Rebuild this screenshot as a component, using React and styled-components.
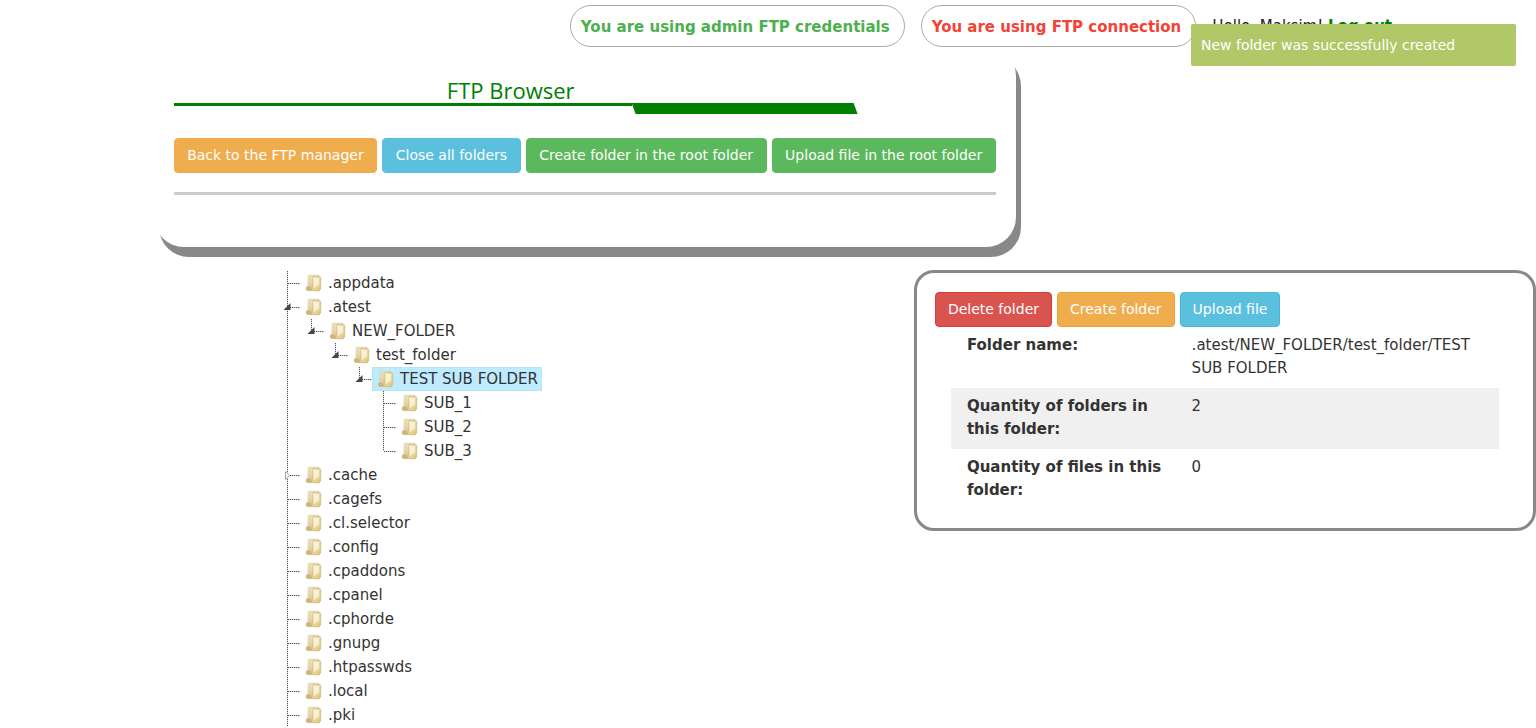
import React, { useState } from "react";
import styled, { createGlobalStyle, css } from "styled-components";

const GlobalStyle = createGlobalStyle`
  *, *::before, *::after { box-sizing: border-box; }
  body {
    margin: 0;
    background: #fff;
    color: #333;
    font: 15px/23px Verdana, "DejaVu Sans", sans-serif;
  }
`;

const Header = styled.header`
  display: flex;
  justify-content: flex-end;
  align-items: center;
  gap: 16px;
  padding: 5px 144px 0 16px;
  line-height: 24px;
`;

const Pill = styled.strong`
  padding: 9px 14px 7px 10px;
  border: 1px solid #aaa;
  border-radius: 21px;
  white-space: nowrap;
  color: ${(p) => p.$color};
`;

const Greeting = styled.div`
  color: #222;
  white-space: nowrap;
`;

const LogoutLink = styled.a`
  color: #008000;
  font-weight: bold;
  text-decoration: none;
`;

const Toast = styled.div`
  position: fixed;
  top: 24px;
  right: 20px;
  width: 325px;
  padding: 10px;
  border-radius: 2px;
  background: #b0c868;
  color: #fff;
  font-size: 14px;
  line-height: 22px;
  white-space: nowrap;
`;

const BrowserCard = styled.section`
  width: calc(56% + 2px);
  margin-left: 10%;
  margin-top: -1px;
  padding: 32px 20px 52px;
  border-radius: 30px;
  background: #fff;
  box-shadow: 5px 10px 0 #888;
`;

const Title = styled.h1`
  width: 82%;
  margin: 0;
  padding-bottom: 1px;
  color: #008000;
  font: 400 22px/24px "Open Sans", "Noto Sans", sans-serif;
  text-align: center;
`;

const TitleRule = styled.div`
  display: flex;
  width: 684px;
  max-width: 100%;
  height: 11px;
  margin-bottom: 24px;

  &::before {
    content: "";
    flex: 1;
    height: 3px;
    background: #008000;
  }

  &::after {
    content: "";
    width: 226px;
    background: #008000;
    clip-path: polygon(0 0, 222px 0, 100% 100%, 4px 100%);
  }
`;

const Toolbar = styled.div`
  display: flex;
  gap: 5px;
`;

const tones = {
  orange: ["#f0ad4e", "#eea236"],
  blue: ["#5bc0de", "#46b8da"],
  green: ["#5cb85c", "#4cae4c"],
  red: ["#d9534f", "#d43f3a"],
};

const Button = styled.button`
  flex: ${(p) => (p.$grow ? "1 1 auto" : "0 0 auto")};
  height: 35px;
  padding: 0 ${(p) => (p.$grow ? 8 : 12)}px;
  border: 1px solid ${(p) => tones[p.$tone][p.$grow ? 0 : 1]};
  border-radius: 4px;
  background: ${(p) => tones[p.$tone][0]};
  color: #fff;
  font: inherit;
  font-size: 14px;
  white-space: nowrap;
  cursor: pointer;
`;

const Divider = styled.hr`
  height: 3px;
  margin: 19px 0 0;
  border: 0;
  background: #ccc;
`;

const Main = styled.main`
  display: grid;
  grid-template-columns: 595fr 405fr;
  align-items: start;
  margin-top: 24px;
`;

const TreeList = styled.ul`
  margin: 0;
  padding: 0 0 0 ${(p) => (p.$root ? "276px" : "24px")};
  list-style: none;
`;

const TreeItem = styled.li`
  background-image: repeating-linear-gradient(#555 0 1px, #ddd 1px 2px);
  background-repeat: no-repeat;
  background-position: 11px 0;
  background-size: 1px ${(p) => (p.$last ? "12px" : "100%")};
`;

const Row = styled.div`
  display: flex;
  height: 24px;
`;

const joint = css`
  flex: none;
  width: 24px;
  height: 24px;
  padding: 0;
  border: 0;
  background: none;

  svg { display: block; }
`;

const Branch = styled.span`${joint}`;
const Toggle = styled.button`
  ${joint}
  cursor: pointer;
`;

const FolderLink = styled.a`
  display: flex;
  align-items: center;
  height: 24px;
  padding: 0 4px 0 1px;
  border-radius: 2px;
  color: inherit;
  line-height: 24px;
  text-decoration: none;
  white-space: nowrap;
  ${(p) =>
    p.$selected &&
    css`
      background: #beebff;
      box-shadow: inset 0 0 1px #999;
    `}

  svg { flex: none; margin-right: 3px; }
`;

const Details = styled.aside`
  margin-top: -1px;
  padding: 19px 18px 18px;
  border: 3px solid #888;
  border-radius: 20px;
`;

const InfoTable = styled.table`
  width: calc(100% - 32px);
  margin: 0 16px;
  border-collapse: collapse;
  table-layout: fixed;

  th, td {
    padding: 7px 8px 8px 16px;
    text-align: left;
    vertical-align: top;
  }

  th { width: 41%; }

  tr:nth-child(even) { background: #f0f0f0; }
`;

function BranchLines({ state }) {
  return (
    <svg width="24" height="24" viewBox="0 0 24 24" aria-hidden="true">
      <path d="M12 12.5H24" stroke="#ccc" />
      <path d="M12 12.5H24" stroke="#555" strokeDasharray="1 1" />
      {state === "open" && <path d="M14.5 8V15H7.5Z" fill="#444" />}
      {state === "closed" && (
        <path d="M9.5 8.5L13.5 12.5L9.5 16.5Z" fill="#fff" stroke="#aaa" />
      )}
    </svg>
  );
}

function FolderIcon() {
  return (
    <svg width="24" height="24" viewBox="0 0 24 24" aria-hidden="true">
      <path d="M7.3 4.3H17.5L18.6 5.5V19.5H7L5.4 19L5.2 16.4L6.8 14.5Z" fill="url(#folderBack)" stroke="#d8c79c" strokeWidth=".6" />
      <path d="M5.2 16.4L6.8 15L10 16L11.5 19.7H6.2L5.2 18.8Z" fill="#cfb678" />
      <path d="M11.8 6.5L12.6 5.8H19.2L19.8 6.6V17.4L18.2 19.8H12.6L11.4 18.6Z" fill="url(#folderFront)" stroke="#cdb576" strokeWidth=".6" />
      <path d="M13 7H18V14.5L13 16.5Z" fill="#fffae8" opacity=".6" />
    </svg>
  );
}

function IconGradients() {
  return (
    <svg width="0" height="0" display="block" aria-hidden="true">
      <defs>
        <linearGradient id="folderBack" x1="0" y1="0" x2="1" y2="1">
          <stop offset="0" stopColor="#f3e9cb" />
          <stop offset="1" stopColor="#cdb47a" />
        </linearGradient>
        <linearGradient id="folderFront" x1="0" y1="0" x2="1" y2="1">
          <stop offset="0" stopColor="#fbf3d6" />
          <stop offset="1" stopColor="#dcbf72" />
        </linearGradient>
      </defs>
    </svg>
  );
}

const folders = [
  { name: ".appdata" },
  {
    name: ".atest",
    open: true,
    children: [
      {
        name: "NEW_FOLDER",
        open: true,
        children: [
          {
            name: "test_folder",
            open: true,
            children: [
              {
                name: "TEST SUB FOLDER",
                open: true,
                selected: true,
                children: [{ name: "SUB_1" }, { name: "SUB_2" }, { name: "SUB_3" }],
              },
            ],
          },
        ],
      },
    ],
  },
  { name: ".cache", children: [] },
  { name: ".cagefs" },
  { name: ".cl.selector" },
  { name: ".config" },
  { name: ".cpaddons" },
  { name: ".cpanel" },
  { name: ".cphorde" },
  { name: ".gnupg" },
  { name: ".htpasswds" },
  { name: ".local" },
  { name: ".pki" },
];

function TreeNode({ node, last }) {
  const [open, setOpen] = useState(Boolean(node.open));
  return (
    <TreeItem $last={last}>
      <Row>
        {node.children ? (
          <Toggle
            type="button"
            aria-expanded={open}
            aria-label={`Toggle ${node.name}`}
            onClick={() => setOpen(!open)}
          >
            <BranchLines state={open ? "open" : "closed"} />
          </Toggle>
        ) : (
          <Branch>
            <BranchLines />
          </Branch>
        )}
        <FolderLink href="#" $selected={node.selected}>
          <FolderIcon />
          {node.name}
        </FolderLink>
      </Row>
      {open && node.children.length > 0 && (
        <TreeList>
          {node.children.map((child, i) => (
            <TreeNode key={child.name} node={child} last={i === node.children.length - 1} />
          ))}
        </TreeList>
      )}
    </TreeItem>
  );
}

export default function App() {
  return (
    <>
      <GlobalStyle />
      <IconGradients />
      <Header>
        <Pill $color="#4caf50">You are using admin FTP credentials</Pill>
        <Pill $color="#f44336">You are using FTP connection</Pill>
        <Greeting>
          Hello, Maksim! <LogoutLink href="#">Log out</LogoutLink>
        </Greeting>
      </Header>
      <BrowserCard>
        <Title>FTP Browser</Title>
        <TitleRule />
        <Toolbar>
          <Button type="button" $grow $tone="orange">Back to the FTP manager</Button>
          <Button type="button" $grow $tone="blue">Close all folders</Button>
          <Button type="button" $grow $tone="green">Create folder in the root folder</Button>
          <Button type="button" $grow $tone="green">Upload file in the root folder</Button>
        </Toolbar>
        <Divider />
      </BrowserCard>
      <Main>
        <TreeList $root>
          {folders.map((node) => (
            <TreeNode key={node.name} node={node} last={false} />
          ))}
        </TreeList>
        <Details>
          <Toolbar>
            <Button type="button" $tone="red">Delete folder</Button>
            <Button type="button" $tone="orange">Create folder</Button>
            <Button type="button" $tone="blue">Upload file</Button>
          </Toolbar>
          <InfoTable>
            <tbody>
              <tr>
                <th scope="row">Folder name:</th>
                <td>.atest/NEW_FOLDER/test_folder/TEST SUB FOLDER</td>
              </tr>
              <tr>
                <th scope="row">Quantity of folders in this folder:</th>
                <td>2</td>
              </tr>
              <tr>
                <th scope="row">Quantity of files in this folder:</th>
                <td>0</td>
              </tr>
            </tbody>
          </InfoTable>
        </Details>
      </Main>
      <Toast role="status">New folder was successfully created</Toast>
    </>
  );
}
